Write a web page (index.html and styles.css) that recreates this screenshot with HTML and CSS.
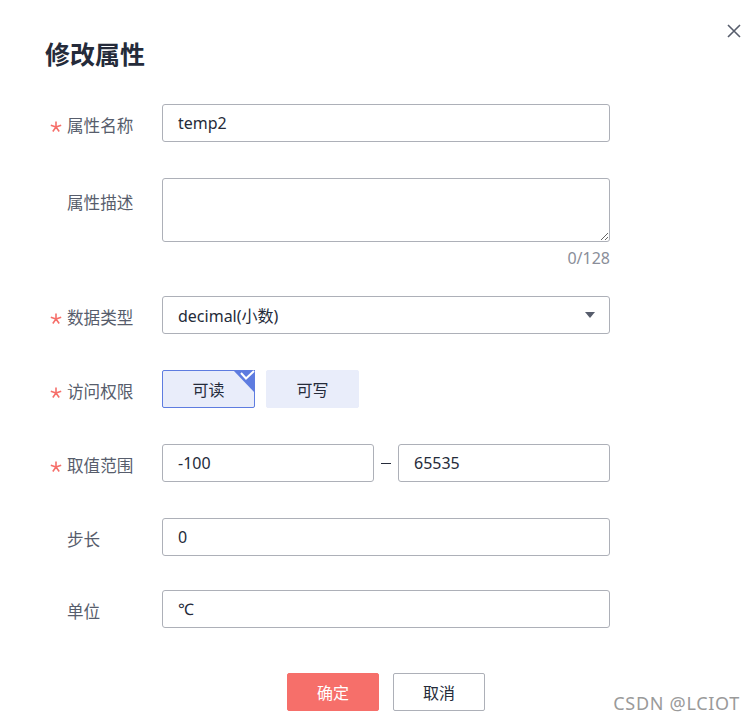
FILE: index.html
```html
<!DOCTYPE html>
<html lang="zh-CN">
<head>
    <meta charset="UTF-8">
    <meta name="viewport" content="width=device-width, initial-scale=1.0">
    <title>修改属性</title>
    <link rel="stylesheet" href="styles.css">
</head>
<body>
    <div class="modal">
        <button class="close-btn" aria-label="关闭">
            <svg width="14" height="14" viewBox="0 0 14 14">
                <path d="M1 1L13 13M13 1L1 13" stroke="#575d6c" stroke-width="1.6" fill="none"/>
            </svg>
        </button>
        <h1 class="title">修改属性</h1>

        <div class="form">
            <div class="row">
                <label class="label"><span class="req"><svg width="12" height="12" viewBox="0 0 12 12"><path d="M6 6V0.5M6 6L11.2 4.3M6 6L9.2 10.5M6 6L2.8 10.5M6 6L0.8 4.3" stroke="#f66f6a" stroke-width="1.6" fill="none"/></svg></span>属性名称</label>
                <div class="field">
                    <input class="input" type="text" value="temp2">
                </div>
            </div>

            <div class="row row-desc">
                <label class="label">属性描述</label>
                <div class="field">
                    <textarea class="textarea"></textarea>
                    <div class="counter">0/128</div>
                </div>
            </div>

            <div class="row">
                <label class="label"><span class="req"><svg width="12" height="12" viewBox="0 0 12 12"><path d="M6 6V0.5M6 6L11.2 4.3M6 6L9.2 10.5M6 6L2.8 10.5M6 6L0.8 4.3" stroke="#f66f6a" stroke-width="1.6" fill="none"/></svg></span>数据类型</label>
                <div class="field">
                    <div class="select">
                        <span>decimal(小数)</span>
                        <span class="caret"></span>
                    </div>
                </div>
            </div>

            <div class="row">
                <label class="label"><span class="req"><svg width="12" height="12" viewBox="0 0 12 12"><path d="M6 6V0.5M6 6L11.2 4.3M6 6L9.2 10.5M6 6L2.8 10.5M6 6L0.8 4.3" stroke="#f66f6a" stroke-width="1.6" fill="none"/></svg></span>访问权限</label>
                <div class="field options">
                    <button class="option active">
                        可读
                        <svg class="corner" width="22" height="23" viewBox="0 0 22 23">
                            <polygon points="0,0 22,0 22,23" fill="#5e7ce0"/>
                            <polyline points="8,3 13,8.5 21,1" stroke="#fff" stroke-width="2" fill="none"/>
                        </svg>
                    </button>
                    <button class="option">可写</button>
                </div>
            </div>

            <div class="row">
                <label class="label"><span class="req"><svg width="12" height="12" viewBox="0 0 12 12"><path d="M6 6V0.5M6 6L11.2 4.3M6 6L9.2 10.5M6 6L2.8 10.5M6 6L0.8 4.3" stroke="#f66f6a" stroke-width="1.6" fill="none"/></svg></span>取值范围</label>
                <div class="field range">
                    <input class="input" type="text" value="-100">
                    <span class="dash"></span>
                    <input class="input" type="text" value="65535">
                </div>
            </div>

            <div class="row row-step">
                <label class="label">步长</label>
                <div class="field">
                    <input class="input" type="text" value="0">
                </div>
            </div>

            <div class="row row-unit">
                <label class="label">单位</label>
                <div class="field">
                    <input class="input" type="text" value="℃">
                </div>
            </div>

            <div class="row">
                <div class="label"></div>
                <div class="field actions">
                    <button class="btn btn-primary">确定</button>
                    <button class="btn btn-default">取消</button>
                </div>
            </div>
        </div>

        <div class="watermark">CSDN @LCIOT</div>
    </div>
</body>
</html>
```

FILE: styles.css
```css
body {
    margin: 0;
    background: #fff;
    font-family: "Noto Sans", "Noto Sans CJK SC", sans-serif;
    color: #252b3a;
}
.modal {
    position: relative;
    width: 755px;
    height: 722px;
    padding: 36px 0 0 45px;
    box-sizing: border-box;
}
.close-btn {
    position: absolute;
    top: 24px;
    right: 14px;
    width: 14px;
    height: 14px;
    padding: 0;
    border: none;
    background: none;
    cursor: pointer;
    line-height: 0;
}
.title {
    margin: 0 0 32px;
    font-size: 25px;
    line-height: 36px;
    font-weight: 700;
    color: #252b3a;
}
.row {
    display: flex;
    margin-bottom: 36px;
}
.row-desc {
    margin-bottom: 26px;
}
.row-step {
    margin-bottom: 34px;
}
.row-unit {
    margin-bottom: 45px;
}
.label {
    width: 117px;
    flex-shrink: 0;
    display: flex;
    align-items: center;
    height: 38px;
    padding: 3px 0 0 22px;
    box-sizing: border-box;
    position: relative;
    font-size: 16.6px;
    color: #575d6c;
}
.row-desc .label {
    height: 44px;
}
.req {
    position: absolute;
    left: 5px;
    top: 17px;
    line-height: 0;
}
.field {
    width: 448px;
}
.input {
    display: block;
    width: 100%;
    height: 38px;
    box-sizing: border-box;
    padding: 0 15px;
    border: 1px solid #adb0b8;
    border-radius: 3px;
    font-family: inherit;
    font-size: 16px;
    color: #252b3a;
    outline: none;
    background: #fff;
}
.textarea {
    display: block;
    width: 100%;
    height: 64px;
    box-sizing: border-box;
    padding: 8px 15px;
    border: 1px solid #adb0b8;
    border-radius: 3px;
    font-family: inherit;
    font-size: 16px;
    outline: none;
    resize: vertical;
}
.counter {
    text-align: right;
    font-size: 16px;
    line-height: 24px;
    margin-top: 4px;
    color: #8a8e99;
}
.select {
    display: flex;
    align-items: center;
    justify-content: space-between;
    height: 38px;
    box-sizing: border-box;
    padding: 0 14px 0 15px;
    border: 1px solid #adb0b8;
    border-radius: 3px;
    font-size: 16px;
}
.caret {
    width: 0;
    height: 0;
    border-left: 5.5px solid transparent;
    border-right: 5.5px solid transparent;
    border-top: 6px solid #575d6c;
}
.options {
    display: flex;
    gap: 11px;
}
.option {
    position: relative;
    width: 93px;
    height: 38px;
    border: 1px solid #e9edfa;
    border-radius: 2px;
    background: #e9edfa;
    font-family: inherit;
    font-size: 16px;
    color: #252b3a;
    padding: 0;
    cursor: pointer;
}
.option.active {
    border-color: #5e7ce0;
}
.corner {
    position: absolute;
    top: -1px;
    right: -1px;
}
.range {
    display: flex;
    align-items: center;
}
.range .input {
    width: 212px;
}
.dash {
    width: 10px;
    height: 1px;
    background: #252b3a;
    margin: 0 7px;
}
.actions {
    display: flex;
    justify-content: center;
    gap: 14px;
}
.btn {
    width: 92px;
    height: 38px;
    border-radius: 2px;
    font-family: inherit;
    font-size: 16px;
    cursor: pointer;
}
.btn-primary {
    background: #f66f6a;
    border: 1px solid #f66f6a;
    color: #fff;
}
.btn-default {
    background: #fff;
    border: 1px solid #adb0b8;
    color: #252b3a;
}
.watermark {
    position: absolute;
    right: 15px;
    bottom: 7px;
    font-size: 18px;
    color: #9a9a9a;
    letter-spacing: 0.7px;
}
```
